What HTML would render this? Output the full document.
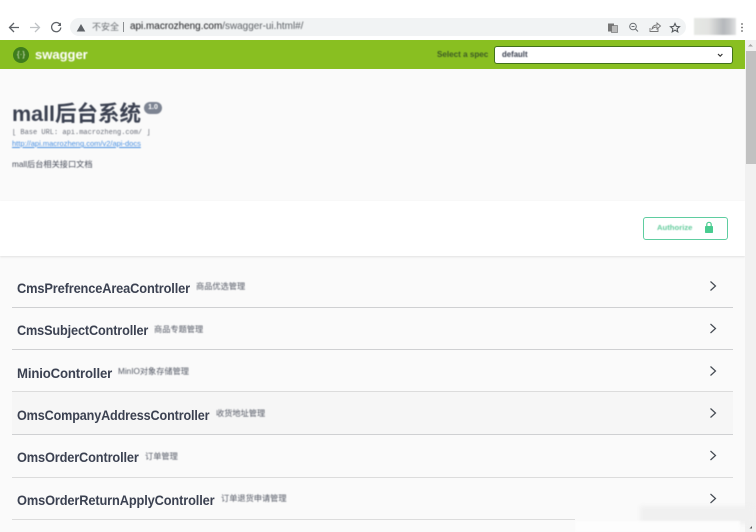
<!DOCTYPE html>
<html><head><meta charset="utf-8">
<style>
html,body{margin:0;padding:0;width:756px;height:532px;overflow:hidden;background:#fff}
body{position:relative;font-family:"Liberation Sans","Noto Sans CJK SC",sans-serif;}
.a{position:absolute;white-space:nowrap}
.t{filter:blur(.4px)}
.n{position:absolute;left:17px;font-weight:700;font-size:14px;color:#3b4151;white-space:nowrap;letter-spacing:-.15px;line-height:18px;filter:blur(.35px);transform-origin:0 50%}
.d{position:absolute;font-size:8.200px;color:#555a66;white-space:nowrap;line-height:12px;filter:blur(.45px)}
.l{position:absolute;left:12px;width:721px;height:1px;background:#cfd0d2}
svg{position:absolute;overflow:visible}
</style></head><body>
<!-- browser bar -->
<div class="a" style="left:70px;top:18px;width:616px;height:18px;border-radius:9px;background:#f1f3f4"></div>
<svg style="left:0;top:0" width="756" height="40" fill="none">
<path d="M19 27.500H10M14 23l-4.500 4.500 4.500 4.500" stroke="#5f6368" stroke-width="1.300"/>
<path d="M30 27.500h9M35 23l4.500 4.500-4.500 4.500" stroke="#c0c3c6" stroke-width="1.300"/>
<path d="M60 24.500a4.600 4.600 0 1 0 .8 3" stroke="#5f6368" stroke-width="1.300"/>
<path d="M61 22.500v3.500h-3.500z" fill="#5f6368"/>
<path d="M81 24l4.300 7.500h-8.600z" fill="#5f6368"/>
<rect x="608" y="23.500" width="6" height="8" fill="#777"/><rect x="611.500" y="25.500" width="6" height="7" fill="#bbb" stroke="#666" stroke-width=".6"/>
<circle cx="633" cy="26.500" r="3.300" stroke="#6a6e72"/><path d="M635.500 29l2.500 2.500M631.500 26.500h3" stroke="#6a6e72"/>
<path d="M650 28v3.500h8V28M652 29c.5-3 2.500-4 5-4v-2l3.500 3-3.500 3v-2c-2 0-3.500.5-5 2z" stroke="#777" stroke-width=".9"/>
<path d="M675 23.500l1.300 2.900 3.200.3-2.400 2.100.7 3.100-2.800-1.700-2.800 1.700.7-3.100-2.400-2.100 3.200-.3z" stroke="#55595d" stroke-width="1.100"/>
<circle cx="742" cy="24" r=".9" fill="#666"/><circle cx="742" cy="27.500" r=".9" fill="#666"/><circle cx="742" cy="31" r=".9" fill="#666"/>
</svg>
<div class="a" style="left:694px;top:18px;width:42px;height:17px;background:linear-gradient(90deg,#e6e8e4 0,#e2e3e1 35%,#b5b8bb 70%,#c5c7c9 85%,#e2e3e3 100%);filter:blur(.8px)"></div>
<div class="a t" style="left:92px;top:21px;font-size:9px;line-height:12px;color:#6a6e72">不安全</div>
<div class="a" style="left:123px;top:22px;width:1px;height:10px;background:#8a8d90"></div>
<div class="a t" style="left:130px;top:20px;font-size:9.950px;line-height:14px;color:#5f6368"><span style="color:#202124">api.macrozheng.com</span>/swagger-ui.html#/</div>
<!-- page bg -->
<div class="a" style="left:0;top:40px;width:745px;height:492px;background:#fafafa"></div>
<div class="a" style="left:0;top:201px;width:745px;height:55px;background:#fff;box-shadow:0 1px 2px rgba(0,0,0,.1)"></div>
<!-- header -->
<div class="a" style="left:0;top:40px;width:745px;height:29px;background:#89bf21"></div>
<div class="a" style="left:13px;top:47px;width:16px;height:16px;border-radius:50%;background:#3f7d1c"></div>
<div class="a t" style="left:13px;top:47px;width:16px;text-align:center;font-size:8px;line-height:16px;color:#dfeccb">{·}</div>
<div class="a t" style="left:35px;top:47px;font-size:13px;font-weight:700;line-height:16px;color:#fff">swagger</div>
<div class="a t" style="left:437px;top:48px;font-size:8.100px;font-weight:700;line-height:14px;color:#3c5a25">Select a spec</div>
<div class="a" style="left:494px;top:46px;width:237px;height:16px;background:#fff;border:1px solid #41711b;border-radius:3px"></div>
<div class="a t" style="left:502px;top:47.500px;font-size:7.800px;font-weight:700;line-height:14px;color:#3b4151">default</div>
<svg style="left:0;top:0" width="756" height="70" fill="none"><path d="M718 54l2.200 2.200 2.200-2.200" stroke="#333" stroke-width="1.200"/></svg>
<!-- scrollbar -->
<div class="a" style="left:745px;top:40px;width:11px;height:492px;background:#f1f1f1"></div>
<div class="a" style="left:746px;top:51px;width:10px;height:113px;background:#c1c1c1"></div>
<svg style="left:0;top:0" width="756" height="532"><path d="M750.500 44l2.500 2.500h-5z" fill="#a5a5a5"/><path d="M752 526l-2.500 2.500h2.500z" fill="#555"/></svg>
<!-- info -->
<div class="a t" style="left:12px;top:100px;font-size:21.500px;font-weight:700;line-height:28px;color:#3b4151">mall后台系统</div>
<div class="a t" style="left:144px;top:102px;width:18px;height:12px;border-radius:7px;background:#7d8492;color:#fff;font-size:7px;font-weight:700;line-height:12px;text-align:center">1.0</div>
<div class="a t" style="left:12px;top:127.500px;font-family:'Liberation Mono',monospace;font-size:7px;line-height:10px;color:#6b6f7a">[ Base URL: api.macrozheng.com/ ]</div>
<div class="a t" style="left:12px;top:139px;font-size:7.500px;line-height:10px;color:#4990e2;text-decoration:underline">http://api.macrozheng.com/v2/api-docs</div>
<div class="a t" style="left:12px;top:159px;font-size:8.200px;line-height:12px;color:#4a4f5c">mall后台相关接口文档</div>
<!-- authorize -->
<div class="a" style="left:643px;top:217px;width:83px;height:21px;border:1px solid #5fcda0;border-radius:3px;background:#fff"></div>
<div class="a t" style="left:657px;top:221px;font-size:7.700px;font-weight:700;line-height:13px;color:#65cc9d">Authorize</div>
<svg style="left:0;top:0" width="756" height="260" fill="none"><rect x="705" y="226" width="8" height="7" rx=".8" fill="#49cc90"/><path d="M706.800 226v-1.500a2.200 2.200 0 0 1 4.400 0v1.500" stroke="#49cc90" stroke-width="1.200"/></svg>
<!-- rows -->
<div class="a" style="left:12px;top:392px;width:721px;height:42px;background:#f6f6f6"></div>
<div class="n" style="top:279px;transform:scaleX(.915)">CmsPrefrenceAreaController</div><div class="d" style="left:196px;top:281px">商品优选管理</div>
<div class="l" style="top:307px"></div>
<div class="n" style="top:321px;transform:scaleX(.906)">CmsSubjectController</div><div class="d" style="left:154px;top:324px">商品专题管理</div>
<div class="l" style="top:349px"></div>
<div class="n" style="top:364px;transform:scaleX(.94)">MinioController</div><div class="d" style="left:118px;top:366px">MinIO对象存储管理</div>
<div class="l" style="top:391px;background:#dcdcdc"></div>
<div class="n" style="top:406px;transform:scaleX(.9)">OmsCompanyAddressController</div><div class="d" style="left:216px;top:408px">收货地址管理</div>
<div class="l" style="top:434px"></div>
<div class="n" style="top:448px;transform:scaleX(.912)">OmsOrderController</div><div class="d" style="left:145px;top:451px">订单管理</div>
<div class="l" style="top:477px;background:#dcdcdc"></div>
<div class="n" style="top:491px;transform:scaleX(.915)">OmsOrderReturnApplyController</div><div class="d" style="left:221px;top:493px">订单退货申请管理</div>
<div class="l" style="top:519px;background:#dcdcdc;width:563px"></div>
<svg style="left:0;top:0" width="756" height="532" fill="none" stroke="#444a52" stroke-width="1.200">
<path d="M710.500 281.500l5 4.500-5 4.500"/><path d="M710.500 324l5 4.500-5 4.500"/><path d="M710.500 366.500l5 4.500-5 4.500"/><path d="M710.500 408.500l5 4.500-5 4.500"/><path d="M710.500 451l5 4.500-5 4.500"/><path d="M710.500 494l5 4.500-5 4.500"/>
</svg>
<!-- watermark smudge -->
<div class="a" style="left:640px;top:506px;width:112px;height:18px;background:#f0f0f0;filter:blur(2px)"></div>
<div class="a" style="left:575px;top:521px;width:165px;height:11px;background:#fdfdfd;filter:blur(1px)"></div>
</body></html>
